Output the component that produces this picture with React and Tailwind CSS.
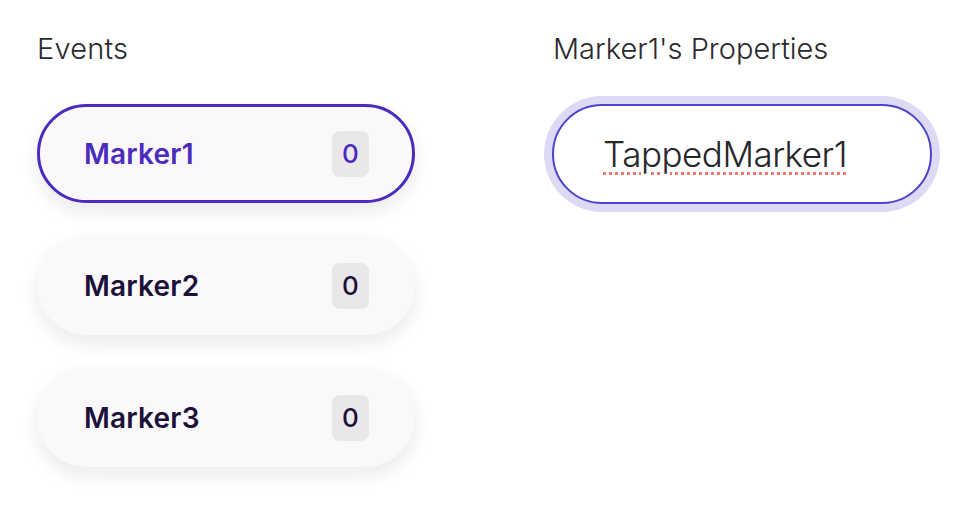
import React from "react";

const markers = [
  { name: "Marker1", count: 0, active: true },
  { name: "Marker2", count: 0 },
  { name: "Marker3", count: 0 },
];

function MarkerRow({ name, count, active }) {
  return (
    <div
      className={
        "flex h-[99px] items-center justify-between rounded-full border-[3px] bg-[#faf8fa] pl-[44px] pr-[43px] shadow-[0_8px_18px_rgba(30,20,40,0.09)] " +
        (active ? "border-[#4a2bbd]" : "border-transparent")
      }
    >
      <span
        className={
          "text-[28px] font-semibold tracking-[0.2px] " +
          (active ? "text-[#4a2bbd]" : "text-[#1b1139]")
        }
      >
        {name}
      </span>
      <span
        className={
          "flex h-[46px] w-[37px] items-center justify-center rounded-lg bg-[#e9e7e9] text-[26px] font-medium " +
          (active ? "text-[#4a2bbd]" : "text-[#1b1139]")
        }
      >
        {count}
      </span>
    </div>
  );
}

export default function App() {
  return (
    <div className="min-h-[510px] w-[970px] bg-white font-['Inter',sans-serif]">
      <div className="flex gap-[137px] pl-[37px] pt-[31px]">
        {/* events list */}
        <div className="w-[378px]">
          <h2 className="text-[29px] leading-[35px] font-light tracking-[0.2px] text-[#2a2a2e]">Events</h2>
          <div className="mt-[38px] flex flex-col gap-[33px]">
            {markers.map((m) => (
              <MarkerRow key={m.name} {...m} />
            ))}
          </div>
        </div>

        {/* properties */}
        <div className="w-[380px]">
          <h2 className="pl-px text-[29px] leading-[35px] font-light text-[#2a2a2e]">
            Marker1's Properties
          </h2>
          <div className="mt-[38px] flex h-[100px] items-center rounded-full border-2 border-[#4a45cf] bg-white pl-[49px] ring-8 ring-[#dcdaf5]">
            <span className="text-[35px] font-light tracking-[-0.5px] text-[#26262b] underline decoration-dotted decoration-[#f07a72] decoration-[3px] underline-offset-[5px]">
              TappedMarker1
            </span>
          </div>
        </div>
      </div>
    </div>
  );
}
